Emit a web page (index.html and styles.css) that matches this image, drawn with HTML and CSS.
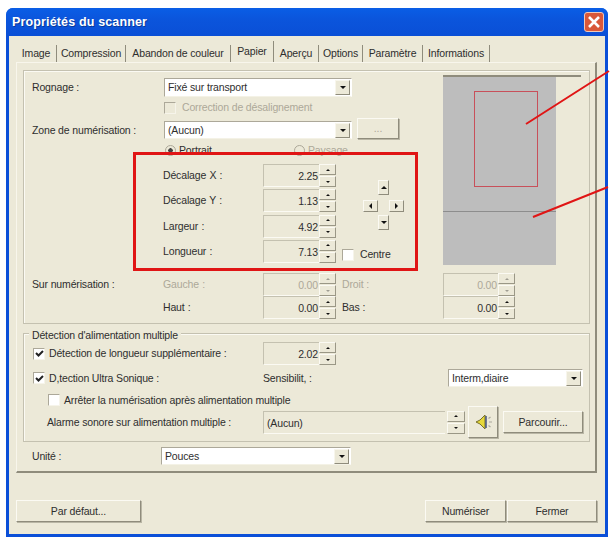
FILE: index.html
```html
<!DOCTYPE html>
<html lang="fr">
<head>
<meta charset="utf-8">
<title>Propriétés du scanner</title>
<link rel="stylesheet" href="styles.css">
</head>
<body>
<div class="stage">
  <div class="window">
    <div class="titlebar">
      <span class="title">Propriétés du scanner</span>
      <span class="close"><svg viewBox="0 0 20 20" width="20" height="20"><path d="M5 5l10 10M15 5L5 15" stroke="#fff" stroke-width="2.6" fill="none"/></svg></span>
    </div>
    <div class="client">
      <div class="tabs">
        <span class="tab t1">Image</span>
        <span class="tab t2">Compression</span>
        <span class="tab t3">Abandon de couleur</span>
        <span class="tab t4 active">Papier</span>
        <span class="tab t5">Aperçu</span>
        <span class="tab t6">Options</span>
        <span class="tab t7">Paramètre</span>
        <span class="tab t8">Informations</span>
      </div>
      <div class="panel">
        <div class="group scan">
          <div class="top">
            <div class="left">
              <div class="row r-crop">
                <span class="label">Rognage :</span>
                <div class="select w188 tall"><span>Fixé sur transport</span><i class="drop"><b class="tri down"></b></i></div>
              </div>
              <div class="row r-correct">
                <i class="check off"></i><span class="dim">Correction de désalignement</span>
              </div>
              <div class="row r-zone">
                <span class="label">Zone de numérisation :</span>
                <div class="select w188"><span>(Aucun)</span><i class="drop"><b class="tri down"></b></i></div>
                <span class="btn more dim">...</span>
              </div>
              <div class="row r-orient">
                <span class="opt"><i class="radio"></i><span>Portrait</span></span>
                <span class="opt"><i class="radio blank"></i><span class="dim">Paysage</span></span>
              </div>
              <div class="offsets">
                <div class="spins">
                  <div class="spinrow"><span class="slabel">Décalage X :</span><span class="num">2.25</span><span class="spin"><i><b class="tri up"></b></i><i><b class="tri down"></b></i></span></div>
                  <div class="spinrow"><span class="slabel">Décalage Y :</span><span class="num">1.13</span><span class="spin"><i><b class="tri up"></b></i><i><b class="tri down"></b></i></span></div>
                  <div class="spinrow"><span class="slabel">Largeur :</span><span class="num">4.92</span><span class="spin"><i><b class="tri up"></b></i><i><b class="tri down"></b></i></span></div>
                  <div class="spinrow"><span class="slabel">Longueur :</span><span class="num">7.13</span><span class="spin"><i><b class="tri up"></b></i><i><b class="tri down"></b></i></span></div>
                </div>
                <div class="side">
                  <div class="pad">
                    <i class="p-up"><b class="tri up"></b></i>
                    <i class="p-left"><b class="tri left"></b></i>
                    <i class="p-right"><b class="tri right"></b></i>
                    <i class="p-down"><b class="tri down"></b></i>
                  </div>
                  <div class="center"><i class="check"></i><span>Centre</span></div>
                </div>
              </div>
            </div>
            <div class="preview">
              <div class="sheet"><div class="area"></div><div class="rule"></div></div>
            </div>
          </div>
          <div class="overscan">
            <span class="label ov">Sur numérisation :</span>
            <span class="slabel dim">Gauche :</span><span class="num dim">0.00</span><span class="spin off"><i><b class="tri up"></b></i><i><b class="tri down"></b></i></span>
            <span class="blabel dim">Droit :</span><span class="num short dim">0.00</span><span class="spin off"><i><b class="tri up"></b></i><i><b class="tri down"></b></i></span>
          </div>
          <div class="overscan">
            <span class="label ov"></span>
            <span class="slabel">Haut :</span><span class="num">0.00</span><span class="spin"><i><b class="tri up"></b></i><i><b class="tri down"></b></i></span>
            <span class="blabel">Bas :</span><span class="num short">0.00</span><span class="spin"><i><b class="tri up"></b></i><i><b class="tri down"></b></i></span>
          </div>
        </div>
        <div class="group multi">
          <span class="legend">Détection d'alimentation multiple</span>
          <div class="mrow m1">
            <i class="check on"><svg viewBox="0 0 11 11" width="11" height="11"><path d="M2 5l2.5 2.5L9 3" stroke="#222" stroke-width="2" fill="none"/></svg></i>
            <span class="mlabel">Détection de longueur supplémentaire :</span>
            <span class="num">2.02</span><span class="spin"><i><b class="tri up"></b></i><i><b class="tri down"></b></i></span>
          </div>
          <div class="mrow m2">
            <i class="check on"><svg viewBox="0 0 11 11" width="11" height="11"><path d="M2 5l2.5 2.5L9 3" stroke="#222" stroke-width="2" fill="none"/></svg></i>
            <span class="mlabel">D,tection Ultra Sonique :</span>
            <span class="sens">Sensibilit, :</span>
            <div class="select w135"><span>Interm,diaire</span><i class="drop"><b class="tri down"></b></i></div>
          </div>
          <div class="mrow m3">
            <i class="check"></i><span>Arrêter la numérisation après alimentation multiple</span>
          </div>
          <div class="mrow m4">
            <span class="alarm">Alarme sonore sur alimentation multiple :</span>
            <span class="num wide">(Aucun)</span>
            <span class="spin alone"><i><b class="tri up"></b></i><i><b class="tri down"></b></i></span>
            <span class="btn sound"><svg viewBox="0 0 22 22" width="22" height="22"><path d="M4 11l4-2 5-5v14l-5-5z" fill="#e6d83a" stroke="#77702a"/><path d="M14 5v12" stroke="#3a4a78" stroke-width="1.4"/><path d="M16.5 7.5l2-1.5M17 11h3M16.5 14.5l2 1.5" stroke="#a9a89c" stroke-width="1.2"/></svg></span>
            <span class="btn browse">Parcourir...</span>
          </div>
        </div>
        <div class="unit">
          <span class="ulabel">Unité :</span>
          <div class="select w190"><span>Pouces</span><i class="drop"><b class="tri down"></b></i></div>
        </div>
      </div>
      <div class="footer">
        <span class="btn b-default">Par défaut...</span>
        <span class="grow"></span>
        <span class="btn b-scan">Numériser</span>
        <span class="btn b-close">Fermer</span>
      </div>
    </div>
  </div>
  <div class="redbox"></div>
  <svg class="callouts" viewBox="0 0 612 539" width="612" height="539"><path d="M526 124L609 71M533 217L608 187" stroke="#e01515" stroke-width="2" fill="none"/></svg>
</div>
</body>
</html>
```
FILE: styles.css
```css
* { box-sizing: border-box; }
html, body { margin: 0; padding: 0; background: #fff; }
body { font: 10.5px/13px "Liberation Sans", Arial, sans-serif; letter-spacing: -.15px; color: #2e2e2e; }
i, b { display: block; font-style: normal; }

.stage { position: relative; width: 612px; height: 539px; overflow: hidden; padding: 8px 4px 2px 6px; }
.window { width: 602px; height: 529px; border-radius: 7px 7px 0 0; background: #0a4fd8; padding: 0 3px 3px; }
.titlebar { height: 28px; margin: 0 -3px; padding: 0 4px 0 6px; display: flex; align-items: center; justify-content: space-between; background: linear-gradient(#0a5ee6, #0b55dc 40%, #0a4fd6); border-radius: 7px 7px 0 0; }
.title { color: #fff; font: bold 12.5px/16px "Liberation Sans", Arial, sans-serif; letter-spacing: .15px; text-shadow: 1px 1px 0 #0a3a9a; }
.close { width: 20px; height: 20px; background: #d9583a; border: 1px solid #f0c8b8; border-radius: 3px; display: block; margin-top: -1px; }
.close svg { display: block; margin: -1px; }

.client { background: #ece9d8; height: 498px; padding: 7px 8px 0 7px; }

.tabs { display: flex; height: 19px; align-items: flex-end; }
.tab { height: 17px; padding-top: 2px; border-right: 1px solid #8f8c7c; text-align: center; flex: none; }
.t1 { width: 41px; }
.t2 { width: 69px; }
.t3 { width: 105px; }
.t4 { width: 43px; }
.t5 { width: 45px; }
.t6 { width: 44px; }
.t7 { width: 60px; }
.t8 { width: 67px; }
.active { height: 21px; padding-top: 4px; }

.panel { width: 581px; height: 411px; border: 1px solid #f8f6ec; border-right: 2px solid #8f8c7c; border-bottom: 2px solid #8f8c7c; padding: 7px 7px 0 6px; }

.group { border: 1px solid #c4c1b0; box-shadow: inset 1px 1px 0 #fbfaf3; width: 567px; }
.scan { height: 254px; }
.top { display: flex; }
.left { width: 419px; height: 194px; }
.row { display: flex; align-items: center; }
.label { width: 140px; padding-left: 8px; flex: none; }
.dim { color: #aca899; }

.select { height: 18px; background: #fff; border: 1px solid #aca899; border-right-color: #fff; border-bottom-color: #f4f2e6; display: flex; align-items: center; justify-content: space-between; padding-left: 3px; flex: none; }
.select.tall { height: 19px; }
.w188 { width: 188px; }
.w135 { width: 135px; }
.w190 { width: 190px; }
.drop { width: 15px; height: 15px; background: #ece9d8; border: 1px solid; border-color: #f8f6ec #8f8c7c #8f8c7c #f8f6ec; display: flex; align-items: center; justify-content: center; margin-right: 1px; }

.tri { width: 0; height: 0; border: 3px solid transparent; }
.tri.up { border-top-width: 0; border-bottom: 3px solid #111; }
.tri.down { border-bottom-width: 0; border-top: 3px solid #111; }
.tri.left { border-left-width: 0; border-right: 3px solid #111; }
.tri.right { border-right-width: 0; border-left: 3px solid #111; }
.spin .tri { border-width: 2px; }
.spin .tri.up { border-top-width: 0; }
.spin .tri.down { border-bottom-width: 0; }

.r-crop { height: 19px; margin-top: 7px; }
.r-correct { height: 13px; margin-top: 4px; padding-left: 140px; }
.r-correct .check { margin-right: 6px; }
.r-zone { height: 21px; margin-top: 4px; align-items: flex-end; }
.r-zone .label { padding-bottom: 2px; }
.r-orient { height: 12px; margin-top: 5px; padding-left: 141px; }
.opt { display: flex; align-items: center; width: 129px; }

.check { width: 12px; height: 12px; background: #fff; border: 1px solid #aca899; border-right-color: #f6f4ea; border-bottom-color: #f6f4ea; flex: none; }
.check.off { background: #ece9d8; }
.check.on svg { display: block; margin: -0.5px; }
.radio { width: 11px; height: 11px; border-radius: 50%; border: 1px solid #aca899; margin-right: 3px; background: radial-gradient(circle, #444 2px, #ece9d8 2.5px); }
.radio.blank { background: #ece9d8; }

.btn { display: flex; align-items: center; justify-content: center; background: #ece9d8; border: 1px solid; border-color: #fbfaf3 #8f8c7c #8f8c7c #fbfaf3; box-shadow: 1px 1px 0 #b9b6a5; flex: none; }
.more { width: 42px; height: 21px; margin-left: 5px; }

.offsets { display: flex; margin-top: 8px; padding-left: 139px; }
.spins { display: grid; grid-template-rows: repeat(4, 23px); row-gap: 2.3px; }
.spinrow { display: flex; }
.slabel { width: 100px; padding-top: 5px; flex: none; word-spacing: .5px; }
.num { width: 56px; height: 23px; flex: none; border: 1px solid #c4c1b0; border-right: 0; border-bottom-color: #fbfaf3; text-align: right; padding: 5px 1px 0 0; }
.num.short { width: 55px; }
.num.wide { width: 182px; text-align: left; padding: 5px 0 0 3px; }
.spin { width: 17px; height: 23px; display: flex; flex-direction: column; gap: 1px; flex: none; }
.spin i { flex: 1; background: #ece9d8; border: 1px solid; border-color: #fbfaf3 #9a9786 #9a9786 #fbfaf3; display: flex; align-items: center; justify-content: center; }
.spin.off .tri { opacity: .35; }
.spin.alone { width: 18px; margin-left: 2px; }

.side { width: 70px; padding-left: 6px; }
.pad { display: grid; grid-template-columns: 15px 11px 15px; grid-template-rows: 15px 5px 12px 3px 15px; width: 41px; margin: 16px 0 0 21px; }
.pad i { background: #ece9d8; border: 1px solid; border-color: #fbfaf3 #8f8c7c #8f8c7c #fbfaf3; display: flex; align-items: center; justify-content: center; }
.p-up { grid-column: 2; grid-row: 1; }
.p-left { grid-column: 1; grid-row: 3; }
.p-right { grid-column: 3; grid-row: 3; }
.p-down { grid-column: 2; grid-row: 5; }
.center { display: flex; align-items: center; gap: 6px; margin-top: 18px; }

.preview { width: 138px; height: 190px; margin-top: 4px; border-top: 2px solid #8f8c7c; }
.sheet { position: relative; width: 113px; height: 188px; background: #bdbdbd; }
.area { position: absolute; left: 31px; top: 14px; width: 64px; height: 96px; border: 1px solid #c8505a; }
.rule { position: absolute; left: 0; right: 0; top: 134px; height: 1px; background: #8d8d8d; }

.overscan { display: flex; height: 23px; }
.overscan:nth-child(2) { margin-top: 8px; }
.overscan .label { padding-top: 5px; width: 139px; }
.blabel { width: 107px; padding: 5px 0 0 6px; flex: none; }

.multi { position: relative; height: 109px; margin-top: 9px; padding-top: 8px; }
.legend { position: absolute; left: 5px; top: -5px; padding: 0 3px; background: #ece9d8; }
.mrow { display: flex; align-items: center; }
.m1 { height: 23px; padding-left: 9px; }
.m2 { height: 18px; margin-top: 4px; padding-left: 9px; }
.mlabel { width: 218px; padding-left: 4px; flex: none; }
.sens { width: 185px; }
.m3 { height: 14px; margin-top: 6px; padding-left: 24px; gap: 4px; }
.m4 { height: 32px; margin-top: -1px; padding-left: 23px; }
.alarm { width: 216px; flex: none; }
.sound { width: 30px; height: 32px; margin-left: 3px; }
.browse { width: 80px; height: 22px; margin-left: 5px; }

.unit { display: flex; align-items: center; height: 18px; margin-top: 5px; }
.ulabel { width: 138px; padding-left: 9px; flex: none; }

.footer { display: flex; margin-top: 27px; gap: 1px; }
.footer .btn { height: 22px; }
.grow { flex: 1; }
.b-default { width: 125px; }
.b-scan { width: 81px; }
.b-close { width: 90px; }

.redbox { position: absolute; left: 133px; top: 152px; width: 285px; height: 119px; border: 3px solid #e01515; }
.callouts { position: absolute; left: 0; top: 0; }
```
